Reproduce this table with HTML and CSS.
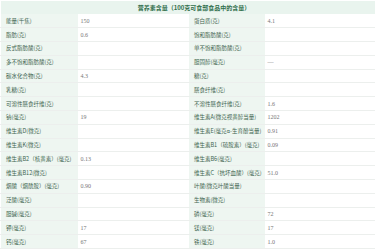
FILE: index.html
```html
<!DOCTYPE html>
<html lang="zh">
<head>
<meta charset="utf-8">
<link rel="stylesheet" href="styles.css">
</head>
<body>
<div class="wrap">
<table class="nutri">
<colgroup><col class="c-l"><col class="c-v"><col class="c-l2"><col class="c-v"></colgroup>
<thead>
<tr class="head"><th colspan="4">营养素含量（100克可食部食品中的含量）</th></tr>
</thead>
<tbody>
<tr><td class="k">能量(千焦)</td><td class="v">150</td><td class="k">蛋白质(克)</td><td class="v">4.1</td></tr>
<tr><td class="k">脂肪(克)</td><td class="v">0.6</td><td class="k">饱和脂肪酸(克)</td><td class="v"></td></tr>
<tr><td class="k">反式脂肪酸(克)</td><td class="v"></td><td class="k">单不饱和脂肪酸(克)</td><td class="v"></td></tr>
<tr><td class="k">多不饱和脂肪酸(克)</td><td class="v"></td><td class="k">胆固醇(毫克)</td><td class="v">—</td></tr>
<tr><td class="k">碳水化合物(克)</td><td class="v">4.3</td><td class="k">糖(克)</td><td class="v"></td></tr>
<tr><td class="k">乳糖(克)</td><td class="v"></td><td class="k">膳食纤维(克)</td><td class="v"></td></tr>
<tr><td class="k">可溶性膳食纤维(克)</td><td class="v"></td><td class="k">不溶性膳食纤维(克)</td><td class="v">1.6</td></tr>
<tr><td class="k">钠(毫克)</td><td class="v">19</td><td class="k">维生素A(微克视黄醇当量)</td><td class="v">1202</td></tr>
<tr><td class="k">维生素D(微克)</td><td class="v"></td><td class="k">维生素E(毫克α-生育酚当量)</td><td class="v">0.91</td></tr>
<tr><td class="k">维生素K(微克)</td><td class="v"></td><td class="k">维生素B1（硫胺素）(毫克)</td><td class="v">0.09</td></tr>
<tr><td class="k">维生素B2（核黄素）(毫克)</td><td class="v">0.13</td><td class="k">维生素B6(毫克)</td><td class="v"></td></tr>
<tr><td class="k">维生素B12(微克)</td><td class="v"></td><td class="k">维生素C（抗坏血酸）(毫克)</td><td class="v">51.0</td></tr>
<tr><td class="k">烟酸（烟酰胺）(毫克)</td><td class="v">0.90</td><td class="k">叶酸(微克叶酸当量)</td><td class="v"></td></tr>
<tr><td class="k">泛酸(毫克)</td><td class="v"></td><td class="k">生物素(微克)</td><td class="v"></td></tr>
<tr><td class="k">胆碱(毫克)</td><td class="v"></td><td class="k">磷(毫克)</td><td class="v">72</td></tr>
<tr><td class="k">钾(毫克)</td><td class="v">17</td><td class="k">镁(毫克)</td><td class="v">17</td></tr>
<tr><td class="k">钙(毫克)</td><td class="v">67</td><td class="k">铁(毫克)</td><td class="v">1.0</td></tr>
</tbody>
</table>
</div>
</body>
</html>
```
FILE: styles.css
```css
html, body {
  margin: 0;
  padding: 0;
  background: #ffffff;
}
.wrap {
  padding-top: 1px;
}
.nutri {
  width: 375px;
  border-collapse: collapse;
  table-layout: fixed;
  font-family: "Noto Sans CJK SC", "Noto Sans", sans-serif;
  font-size: 5.5px;
}
.c-l { width: 77px; }
.c-l2 { width: 76px; }
.c-v { width: 111px; }
.head th {
  height: 13px;
  padding: 0 0 0 12px;
  background: #e9f4ee;
  color: #2f6e4b;
  font-weight: 600;
  text-align: center;
  font-size: 6px;
}
tbody tr {
  height: 13.8px;
}
tbody td {
  padding: 0 0 0 5px;
  border-bottom: 1px solid #ecefed;
  white-space: nowrap;
  overflow: hidden;
}
td.k {
  background: #eef6f1;
  color: #3e6550;
  border-left: 1px solid #ffffff;
}
td.v {
  background: #ffffff;
  color: #777777;
  padding-left: 3px;
  font-family: "Liberation Serif", "Noto Sans CJK SC", serif;
  font-size: 6px;
}
```
